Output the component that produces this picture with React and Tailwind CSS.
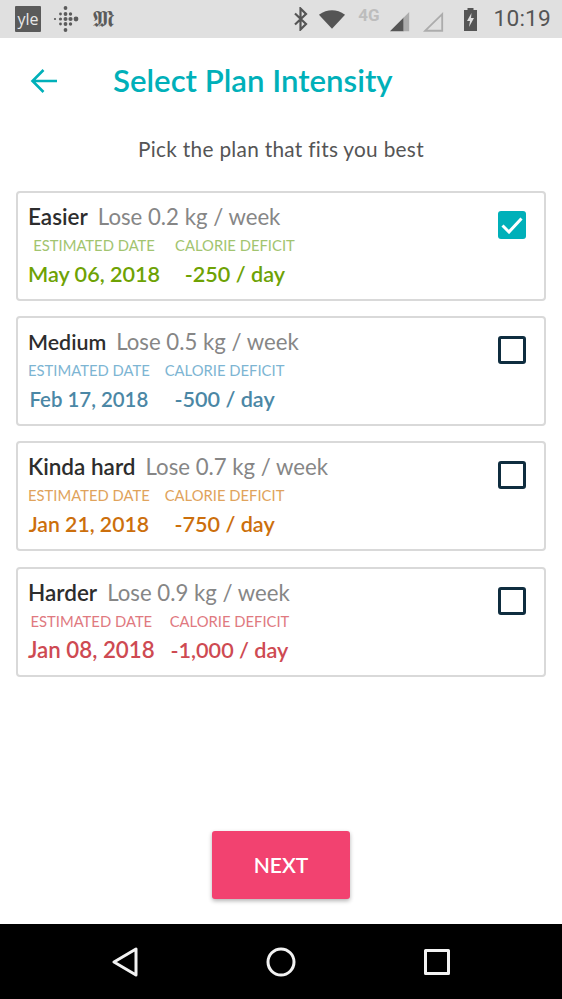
import React from 'react';

const plans = [
  { name: 'Easier', nameSize: 'text-[22.5px]', lose: 'Lose 0.2 kg / week', date: 'May 06, 2018', dateSize: 'text-[21.6px]', deficit: '-250 / day', label: 'text-[#a2c46f]', value: 'text-[#6ea204]', checked: true },
  { name: 'Medium', nameSize: 'text-[21.4px]', lose: 'Lose 0.5 kg / week', date: 'Feb 17, 2018', dateSize: 'text-[20.4px]', deficit: '-500 / day', label: 'text-[#7db5d3]', value: 'text-[#4b87a5]' },
  { name: 'Kinda hard', nameSize: 'text-[22.5px]', lose: 'Lose 0.7 kg / week', date: 'Jan 21, 2018', dateSize: 'text-[21.2px]', deficit: '-750 / day', label: 'text-[#e0a35c]', value: 'text-[#cc6f0c]' },
  { name: 'Harder', nameSize: 'text-[22.5px]', lose: 'Lose 0.9 kg / week', date: 'Jan 08, 2018', dateSize: 'text-[22.3px]', deficit: '-1,000 / day', label: 'text-[#e0797f]', value: 'text-[#ce4a52]' },
];

function FitbitDots() {
  const dots = [
    [12.5, 2, 1.9], [12.5, 8, 1.9], [12.5, 13, 2], [12.5, 18, 1.9], [12.5, 24, 1.9],
    [7.5, 8, 1.4], [7.5, 13, 1.6], [7.5, 18, 1.4],
    [17.5, 8, 1.7], [17.5, 13, 2.1], [17.5, 18, 1.7],
    [2, 13, 1.1], [23, 13, 2.4],
  ];
  return (
    <svg width="26" height="26" viewBox="0 0 26 26" fill="#5b5b5b">
      {dots.map(([x, y, r], i) => <circle key={i} cx={x} cy={y} r={r} />)}
    </svg>
  );
}

function StatusBar() {
  return (
    <div className="h-[38px] bg-[#e0e0e0] flex items-center pl-[15px] pr-[11px] text-[#555555]">
      <div className="w-[26px] h-[26px] bg-[#5a5a5a] rounded-[1px] text-[#e8e8e8] text-[16px] flex items-center justify-center font-['Open_Sans',sans-serif]">yle</div>
      <div className="ml-[12px]"><FitbitDots /></div>
      <span className="ml-[14px] text-[23px] leading-none font-['DejaVu_Sans',serif] text-[#5b5b5b]">𝕸</span>
      <div className="ml-auto flex items-center">
        <svg width="16" height="24" viewBox="0 0 16 24" fill="none" stroke="#555555" strokeWidth="2.2">
          <path d="M2 6.5 13 17 7.5 22.5V1.5L13 7 2 17.5" />
        </svg>
        <svg className="ml-[9px]" width="28" height="22" viewBox="0 0 30 22" fill="#555555">
          <path d="M1 6.5Q15 -3 29 6.5L15 21.5Z" />
        </svg>
        <span className="ml-[12px] -mt-[7px] text-[17px] font-bold text-[#bdbdbd] font-['Roboto',sans-serif]">4G</span>
        <svg className="ml-[9px] mt-[5px]" width="22" height="22" viewBox="0 0 24 24">
          <path d="M1 22 16 7V22Z" fill="#555555" />
          <path d="M16 7 22 1V22H16Z" fill="#acacac" />
        </svg>
        <svg className="ml-[11px] mt-[5px]" width="23" height="22" viewBox="0 0 24 24" fill="none" stroke="#acacac" strokeWidth="2">
          <path d="M3 21.5 21.5 3.5V21.500Z" />
        </svg>
        <svg className="ml-[18px]" width="15" height="24" viewBox="0 0 15 24">
          <path d="M4.500 1h6v2H14v21H1V3h3.500Z" fill="#555555" />
          <path d="M8.500 6 4 14h3l-1 6 5-9H8Z" fill="#e0e0e0" />
        </svg>
        <span className="ml-[16px] text-[22.7px] leading-none tracking-[0.2px] font-['Roboto',sans-serif] text-[#555555]">10:19</span>
      </div>
    </div>
  );
}

function Checkbox({ checked }) {
  if (checked) {
    return (
      <div className="w-[28px] h-[28px] rounded-[3px] bg-[#00b0b9] flex items-center justify-center">
        <svg width="22" height="18" viewBox="0 0 22 18" fill="none" stroke="#ffffff" strokeWidth="3">
          <path d="M1.500 9.500 8 16 20.500 2.500" />
        </svg>
      </div>
    );
  }
  return <div className="w-[28px] h-[28px] rounded-[3px] border-[3px] border-[#0f2d3f]" />;
}

function PlanCard({ plan }) {
  return (
    <div className="h-[110px] rounded-[4px] border-2 border-[#d9d9d9] pl-[10px] pr-[18px] flex justify-between">
      <div>
        <div className="mt-[11px] flex items-baseline gap-[10px] leading-[26px]">
          <span className={`font-semibold text-[#2d2d2d] ${plan.nameSize}`}>{plan.name}</span>
          <span className="text-[22.2px] text-[#868686]">{plan.lose}</span>
        </div>
        <div className="flex gap-[15px] mt-[3px]">
          <div className="flex flex-col items-center">
            <span className={`text-[14.8px] leading-[24px] ${plan.label}`}>ESTIMATED DATE</span>
            <span className={`font-semibold leading-[30px] mt-[2px] ${plan.dateSize} ${plan.value}`}>{plan.date}</span>
          </div>
          <div className="flex flex-col items-center">
            <span className={`text-[14.8px] leading-[24px] ${plan.label}`}>CALORIE DEFICIT</span>
            <span className={`text-[21.6px] font-semibold leading-[30px] mt-[2px] ${plan.value}`}>{plan.deficit}</span>
          </div>
        </div>
      </div>
      <div className="mt-[18px]">
        <Checkbox checked={plan.checked} />
      </div>
    </div>
  );
}

export default function App() {
  return (
    <div className="h-[999px] w-[562px] bg-white flex flex-col overflow-hidden font-['Lato',sans-serif]">
      <StatusBar />
      <header className="h-[85px] flex items-center pl-[30px]">
        <svg width="28" height="26" viewBox="0 0 28 26" fill="none" stroke="#00b0b9" strokeWidth="2.6">
          <path d="M27 13H3M13.500 2 2.500 13 13.500 24" />
        </svg>
        <h1 className="ml-[55px] text-[31.2px] font-semibold text-[#00b0b9]">Select Plan Intensity</h1>
      </header>
      <p className="text-center text-[20.8px] leading-[26px] text-[#555555] tracking-[0.3px] mt-[13px]">Pick the plan that fits you best</p>
      <main className="mt-[28.7px] px-[16px] flex flex-col gap-[15.3px]">
        {plans.map((p) => <PlanCard key={p.name} plan={p} />)}
      </main>
      <div className="flex-1 flex items-end justify-center pb-[25px]">
        <button className="w-[138px] h-[68px] rounded-[3px] bg-[#f24270] text-white text-[21px] font-semibold shadow-[0_2px_4px_rgba(0,0,0,0.3)]">NEXT</button>
      </div>
      <nav className="h-[75px] bg-black flex items-center pl-[112px] pr-[112px] justify-between">
        <svg width="26" height="30" viewBox="0 0 26 30" fill="none" stroke="#f2f2f2" strokeWidth="3" strokeLinejoin="round">
          <path d="M24 2V28L2 15Z" />
        </svg>
        <svg width="30" height="30" viewBox="0 0 30 30" fill="none" stroke="#f2f2f2" strokeWidth="3">
          <circle cx="15" cy="15" r="13" />
        </svg>
        <svg width="26" height="26" viewBox="0 0 26 26" fill="none" stroke="#f2f2f2" strokeWidth="3" strokeLinejoin="round">
          <rect x="1.500" y="1.500" width="23" height="23" />
        </svg>
      </nav>
    </div>
  );
}
